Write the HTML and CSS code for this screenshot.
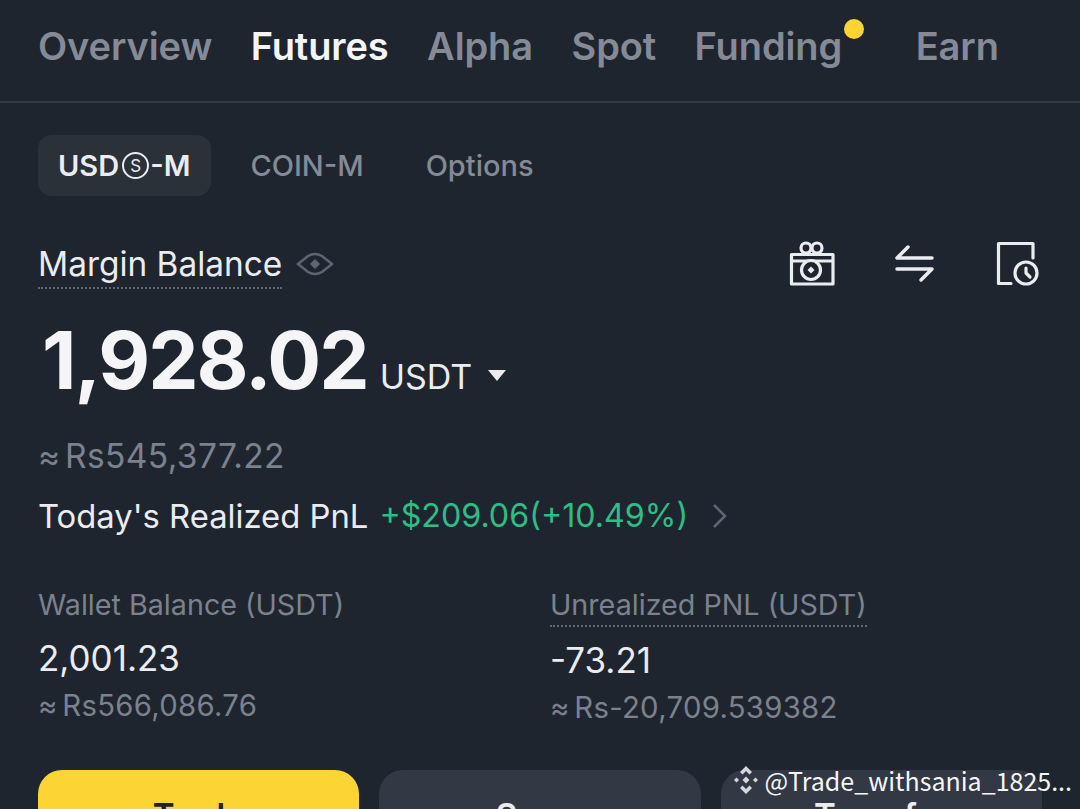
FILE: index.html
```html
<!DOCTYPE html>
<html lang="en">

<head>
    <meta charset="UTF-8">
    <title>Futures</title>
    <link rel="stylesheet" href="styles.css">
</head>

<body>
    <nav class="tabs">
        <span class="tab">Overview</span>
        <span class="tab active">Futures</span>
        <span class="tab">Alpha</span>
        <span class="tab">Spot</span>
        <span class="tab funding">Funding<i class="dot"></i></span>
        <span class="tab">Earn</span>
    </nav>

    <main class="content">
        <div class="subtabs">
            <span class="subtab active">USD<span class="circled">S</span>-M</span>
            <span class="subtab">COIN-M</span>
            <span class="subtab">Options</span>
        </div>

        <div class="balance-head">
            <span class="dotted label-main">Margin Balance</span>
            <svg class="eye" width="38" height="24" viewBox="0 0 38 24" fill="none" stroke="#5e6673" stroke-width="2.500">
                <path d="M2 12 L12 4 Q19 0 26 4 L36 12 L26 20 Q19 24 12 20 Z" />
                <path d="M19 7 L24 12 L19 17 L14 12 Z" fill="#5e6673" stroke="none" />
            </svg>
            <div class="actions">
                <svg width="48" height="48" viewBox="0 0 48 48" fill="none" stroke="#eaecef" stroke-width="3.200" stroke-linejoin="round">
                    <path d="M2.500 14.500 H44 V44 H2.500 Z" />
                    <path d="M2.500 21 H44" />
                    <circle cx="22" cy="30" r="9.500" fill="#1f252f" />
                    <path d="M22 26.500 L25.500 30 L22 33.500 L18.500 30 Z" fill="#eaecef" stroke="none" />
                    <circle cx="17" cy="8" r="5" />
                    <circle cx="28" cy="8" r="5" />
                </svg>
                <svg width="48" height="48" viewBox="0 0 48 48" fill="none" stroke="#eaecef" stroke-width="3.500" stroke-linecap="round" stroke-linejoin="round">
                    <path d="M6 18 H41 M6 18 L17 7" />
                    <path d="M6 29 H41 M41 29 L30 40" />
                </svg>
                <svg width="48" height="48" viewBox="0 0 48 48" fill="none" stroke="#eaecef" stroke-width="3.200" stroke-linecap="round" stroke-linejoin="round">
                    <path d="M40 18 V3.500 H5.500 V43.500 H18" />
                    <circle cx="33" cy="33" r="11" />
                    <path d="M33 28 V33 L37 37" />
                </svg>
            </div>
        </div>

        <div class="amount">
            <span class="value">1,928.02</span>
            <span class="unit">USDT</span>
            <i class="caret"></i>
        </div>
        <div class="fiat">≈ Rs545,377.22</div>

        <div class="pnl">
            <span>Today's Realized PnL</span>
            <span class="green">+$209.06(+10.49%)</span>
            <svg width="16" height="26" viewBox="0 0 16 26" fill="none" stroke="#5e6673" stroke-width="2.500">
                <path d="M2 2 L13 13 L2 24" />
            </svg>
        </div>

        <div class="stats">
            <div class="stat">
                <div class="stat-label">Wallet Balance (USDT)</div>
                <div class="stat-value">2,001.23</div>
                <div class="stat-fiat">≈ Rs566,086.76</div>
            </div>
            <div class="stat">
                <div class="stat-label"><span class="dotted">Unrealized PNL (USDT)</span></div>
                <div class="stat-value lower">-73.21</div>
                <div class="stat-fiat">≈ Rs-20,709.539382</div>
            </div>
        </div>

        <div class="buttons">
            <button class="btn primary">Trade</button>
            <button class="btn">Swap</button>
            <button class="btn">Transfer</button>
        </div>
    </main>

    <div class="watermark">
        <svg width="30" height="30" viewBox="0 0 30 30" fill="#d5d8dd">
            <path d="M15 1 L21 7 L18.500 9.500 L15 6 L11.500 9.500 L9 7 Z" />
            <path d="M15 29 L21 23 L18.500 20.500 L15 24 L11.500 20.500 L9 23 Z" />
            <path d="M15 11.500 L18.500 15 L15 18.500 L11.500 15 Z" />
            <path d="M5.500 12.500 L8 15 L5.500 17.500 L3 15 Z" />
            <path d="M24.500 12.500 L27 15 L24.500 17.500 L22 15 Z" />
        </svg>
        <span>@Trade_withsania_1825...</span>
    </div>
</body>

</html>
```

FILE: styles.css
```css
* {
    box-sizing: border-box;
}

html,
body {
    height: 100%;
    overflow: hidden;
}

body {
    margin: 0;
    background-color: #1f252f;
    color: #eaecef;
    font-family: "Inter", "Noto Sans", sans-serif;
    position: relative;
}

.tabs {
    height: 103px;
    padding: 0 38px 10px;
    display: flex;
    align-items: center;
    gap: 38.500px;
    border-bottom: 2px solid #323a48;
    font-size: 38px;
    font-weight: 600;
    letter-spacing: -0.1px;
    color: #848b97;
}

.tab.active {
    color: #f5f5f7;
}

.funding {
    position: relative;
    margin-right: 35px;
}

.dot {
    position: absolute;
    top: -4px;
    right: -22px;
    width: 20px;
    height: 20px;
    border-radius: 50%;
    background-color: #fcd535;
}

.content {
    padding: 32px 38px 0;
}

.subtabs {
    display: flex;
    align-items: center;
    font-size: 29px;
    font-weight: 500;
    color: #848b97;
    gap: 62px;
}

.subtab.active {
    height: 61px;
    padding: 0 21px 0 20px;
    display: flex;
    align-items: center;
    margin-right: -23px;
    border-radius: 14px;
    background-color: #2b3139;
    color: #eaecef;
    font-weight: 600;
}

.circled {
    width: 27px;
    height: 27px;
    margin: 0 1px 0 3px;
    border: 2px solid #eaecef;
    border-radius: 50%;
    font-size: 17px;
    font-weight: 400;
    display: flex;
    align-items: center;
    justify-content: center;
}

.balance-head {
    height: 48px;
    margin-top: 44px;
    display: flex;
    align-items: center;
}

.dotted {
    border-bottom: 2px dotted #5e6673;
}

.label-main {
    margin-top: 2px;
    font-size: 33.400px;
    line-height: 46px;
    color: #eaecef;
}

.eye {
    margin-left: 14px;
}

.actions {
    margin-left: auto;
    margin-right: 1px;
    display: flex;
    gap: 54px;
}

.amount {
    margin-top: 26px;
    display: flex;
    align-items: baseline;
}

.value {
    margin-left: 4px;
    font-size: 80px;
    line-height: 92px;
    font-weight: 700;
    letter-spacing: -2px;
    color: #f5f5f7;
}

.unit {
    margin-left: 12px;
    font-size: 34px;
}

.caret {
    margin-left: 16px;
    border-left: 9px solid transparent;
    border-right: 9px solid transparent;
    border-top: 11px solid #eaecef;
    transform: translateY(-8px);
}

.fiat {
    margin-top: 30px;
    font-size: 33.500px;
    line-height: 40px;
    letter-spacing: 0.4px;
    word-spacing: -5.400px;
    color: #7b828e;
}

.pnl {
    margin-top: 18px;
    display: flex;
    align-items: center;
    gap: 11px;
    font-size: 32.800px;
    line-height: 44px;
}

.pnl .green {
    font-size: 32.200px;
}

.pnl svg {
    margin-left: 13px;
}

.green {
    color: #2ebd85;
}

.stats {
    margin-top: 49px;
    display: grid;
    grid-template-columns: 512px 1fr;
}

.stat-label {
    font-size: 28.700px;
    line-height: 36px;
    color: #7b828e;
}

.stat-label .dotted {
    padding-bottom: 3px;
}

.stat-value {
    margin-top: 15px;
    font-size: 35px;
    line-height: 40px;
}

.stat-value.lower {
    margin-top: 17px;
}

.stat-fiat {
    margin-top: 10px;
    font-size: 29.300px;
    line-height: 36px;
    letter-spacing: 0.3px;
    word-spacing: -4px;
    color: #7b828e;
}

.buttons {
    margin-top: 44px;
    display: flex;
    gap: 20px;
}

.btn {
    flex: 1;
    height: 90px;
    border: none;
    border-radius: 24px;
    background-color: #323844;
    color: #eaecef;
    font-family: inherit;
    font-size: 33px;
    font-weight: 600;
    padding: 0;
}

.btn.primary {
    background-color: #fcd535;
    color: #1e2329;
}

.watermark {
    position: absolute;
    top: 762px;
    right: 8px;
    display: flex;
    align-items: center;
    gap: 3px;
    font-family: "Noto Sans CJK SC", "Noto Sans", sans-serif;
    font-size: 25px;
    color: #f5f5f7;
    white-space: nowrap;
}
```
